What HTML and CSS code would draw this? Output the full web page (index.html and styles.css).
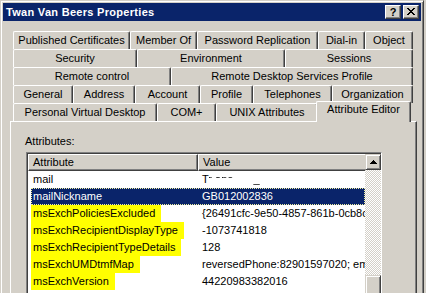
FILE: index.html
```html
<!DOCTYPE html>
<html lang="en">
<head>
    <meta charset="UTF-8">
    <meta name="viewport" content="width=device-width, initial-scale=1.0">
    <title>Twan Van Beers Properties</title>
    <link rel="stylesheet" href="styles.css">
</head>
<body>
    <div class="window">
        <div class="titlebar">
            <span class="title">Twan Van Beers Properties</span>
            <div class="caption-btns">
                <span class="caption-btn help">?</span>
                <span class="caption-btn close">
                    <svg width="8" height="7" viewBox="0 0 8 7" shape-rendering="crispEdges">
                        <path fill="#000" d="M0 0h2v1H0z M6 0h2v1H6z M1 1h2v1H1z M5 1h2v1H5z M2 2h4v1H2z M3 3h2v1H3z M2 4h4v1H2z M1 5h2v1H1z M5 5h2v1H5z M0 6h2v1H0z M6 6h2v1H6z"/>
                    </svg>
                </span>
            </div>
        </div>
        <div class="client">
            <div class="tabs">
                <div class="tab-row r1">
                    <div class="tab">Published Certificates</div>
                    <div class="tab">Member Of</div>
                    <div class="tab">Password Replication</div>
                    <div class="tab">Dial-in</div>
                    <div class="tab">Object</div>
                </div>
                <div class="tab-row r2">
                    <div class="tab">Security</div>
                    <div class="tab">Environment</div>
                    <div class="tab">Sessions</div>
                </div>
                <div class="tab-row r3">
                    <div class="tab">Remote control</div>
                    <div class="tab">Remote Desktop Services Profile</div>
                </div>
                <div class="tab-row r4">
                    <div class="tab">General</div>
                    <div class="tab">Address</div>
                    <div class="tab">Account</div>
                    <div class="tab">Profile</div>
                    <div class="tab">Telephones</div>
                    <div class="tab">Organization</div>
                </div>
                <div class="tab-row r5">
                    <div class="tab">Personal Virtual Desktop</div>
                    <div class="tab">COM+</div>
                    <div class="tab">UNIX Attributes</div>
                    <div class="tab active">Attribute Editor</div>
                </div>
            </div>
            <div class="panel">
                <div class="field-label">Attributes:</div>
                <div class="listbox">
                    <div class="list-main">
                        <div class="list-header">
                            <div class="col-head col-attr">Attribute</div>
                            <div class="col-head col-value">Value</div>
                        </div>
                        <div class="list-row">
                            <div class="row-inner">
                                <div class="cell-attr">mail</div>
                                <div class="cell-value">T<span class="redacted">r ane  </span><span class="redacted low">_</span><span class="redacted">  ·</span></div>
                            </div>
                        </div>
                        <div class="list-row selected">
                            <div class="row-inner">
                                <div class="cell-attr">mailNickname</div>
                                <div class="cell-value">GB012002836</div>
                            </div>
                        </div>
                        <div class="list-row">
                            <div class="row-inner">
                                <div class="cell-attr"><span class="hl">msExchPoliciesExcluded</span></div>
                                <div class="cell-value">{26491cfc-9e50-4857-861b-0cb8c0a1d2e3}</div>
                            </div>
                        </div>
                        <div class="list-row">
                            <div class="row-inner">
                                <div class="cell-attr"><span class="hl">msExchRecipientDisplayType</span></div>
                                <div class="cell-value">-1073741818</div>
                            </div>
                        </div>
                        <div class="list-row">
                            <div class="row-inner">
                                <div class="cell-attr"><span class="hl">msExchRecipientTypeDetails</span></div>
                                <div class="cell-value">128</div>
                            </div>
                        </div>
                        <div class="list-row">
                            <div class="row-inner">
                                <div class="cell-attr"><span class="hl">msExchUMDtmfMap</span></div>
                                <div class="cell-value">reversedPhone:82901597020; emailAddress:82626</div>
                            </div>
                        </div>
                        <div class="list-row">
                            <div class="row-inner">
                                <div class="cell-attr"><span class="hl">msExchVersion</span></div>
                                <div class="cell-value">44220983382016</div>
                            </div>
                        </div>
                    </div>
                    <div class="scrollbar">
                        <div class="sb-btn">
                            <svg width="7" height="4" viewBox="0 0 7 4" shape-rendering="crispEdges">
                                <path fill="#000" d="M3 0h1v1H3z M2 1h3v1H2z M1 2h5v1H1z M0 3h7v1H0z"/>
                            </svg>
                        </div>
                        <div class="sb-track"></div>
                        <div class="sb-thumb"></div>
                    </div>
                </div>
            </div>
        </div>
    </div>
</body>
</html>
```

FILE: styles.css
```css
* {
    margin: 0;
    padding: 0;
    box-sizing: border-box;
}
body {
    width: 426px;
    height: 293px;
    overflow: hidden;
    background-color: #d4d0c8;
    color: #000;
    font-family: 'Liberation Sans', Arial, sans-serif;
    font-size: 11px;
}
.window {
    width: 424px;
    height: 330px;
    border: 1px solid;
    border-color: #d4d0c8 #404040 #404040 #d4d0c8;
    box-shadow: inset 1px 1px #fff, inset -1px -1px #808080;
    padding: 2px;
}
.titlebar {
    height: 18px;
    background-color: #0a246a;
    display: flex;
    align-items: center;
    padding: 0 2px 0 3px;
}
.title {
    flex: 1;
    color: #fff;
    font-weight: bold;
    font-size: 11px;
    letter-spacing: 0.3px;
    white-space: nowrap;
}
.caption-btns {
    display: flex;
    gap: 2px;
}
.caption-btn {
    width: 16px;
    height: 14px;
    background-color: #d4d0c8;
    border: 1px solid;
    border-color: #fff #404040 #404040 #fff;
    box-shadow: inset -1px -1px #808080;
    display: flex;
    align-items: center;
    justify-content: center;
}
.caption-btn.help {
    font-weight: bold;
    font-size: 11px;
    line-height: 12px;
    padding-bottom: 1px;
}
.caption-btn.close svg {
    margin-bottom: 1px;
}

/* tab control */
.client {
    padding: 10px 4px 0 7px;
}
.tabs {
    margin: 0 4px 0 3px;
}
.tab-row {
    display: flex;
    height: 18px;
}
.tab {
    flex: none;
    height: 18px;
    background-color: #d4d0c8;
    border-top: 1px solid #fff;
    border-left: 1px solid #fff;
    border-right: 1px solid #404040;
    border-radius: 2px 2px 0 0;
    box-shadow: inset -1px 0 #808080;
    text-align: center;
    line-height: 15px;
    padding-top: 1px;
    white-space: nowrap;
    overflow: hidden;
}
.r1 .tab:nth-child(1) { width: 117px; }
.r1 .tab:nth-child(2) { width: 67px; }
.r1 .tab:nth-child(3) { width: 121px; }
.r1 .tab:nth-child(4) { width: 47px; }
.r1 .tab:nth-child(5) { width: 48px; }
.r2 .tab:nth-child(1) { width: 124px; }
.r2 .tab:nth-child(2) { width: 148px; }
.r2 .tab:nth-child(3) { width: 128px; }
.r3 .tab:nth-child(1) { width: 158px; }
.r3 .tab:nth-child(2) { width: 242px; }
.r4 .tab:nth-child(1) { width: 60px; }
.r4 .tab:nth-child(2) { width: 62px; }
.r4 .tab:nth-child(3) { width: 65px; }
.r4 .tab:nth-child(4) { width: 53px; }
.r4 .tab:nth-child(5) { width: 79px; }
.r4 .tab:nth-child(6) { width: 81px; }
.r5 .tab:nth-child(1) { width: 144px; }
.r5 .tab:nth-child(2) { width: 59px; }
.r5 .tab:nth-child(3) { width: 102px; }
.r5 .tab:nth-child(4) { width: 95px; }
.tab.active {
    position: relative;
    z-index: 1;
    width: 99px;
    height: 21px;
    margin: -2px -2px -1px -2px;
    padding-top: 0;
}

/* page */
.panel {
    height: 220px;
    border-top: 1px solid #fff;
    border-left: 1px solid #fff;
    border-right: 1px solid #404040;
    box-shadow: inset -1px 0 #808080;
    padding: 13px 0 0 14px;
}
.field-label {
    line-height: 13px;
    height: 13px;
    margin-bottom: 4px;
}
.listbox {
    width: 356px;
    height: 160px;
    margin-left: 1px;
    border: 1px solid;
    border-color: #808080 #fff #fff #808080;
    background-color: #404040;
    padding: 1px 0 0 1px;
    display: flex;
}
.list-main {
    flex: 1;
    background-color: #fff;
    overflow: hidden;
}
.list-header {
    display: flex;
    height: 17px;
    background-color: #d4d0c8;
}
.col-head {
    height: 17px;
    border-top: 1px solid #fff;
    border-left: 1px solid #fff;
    border-right: 1px solid #404040;
    border-bottom: 1px solid #404040;
    box-shadow: inset -1px -1px #808080;
    line-height: 14px;
    padding-left: 4px;
    white-space: nowrap;
}
.col-attr {
    width: 170px;
}
.col-value {
    flex: 1;
    border-right: none;
    box-shadow: inset 0 -1px #808080;
}
.list-row {
    height: 17px;
    padding-left: 3px;
}
.row-inner {
    display: flex;
    height: 17px;
    line-height: 17px;
    white-space: pre;
}
.cell-attr {
    width: 166px;
    flex: none;
    padding-left: 2px;
}
.cell-value {
    flex: 1;
    padding-left: 5px;
    overflow: hidden;
}
.list-row.selected .row-inner {
    background-color: #0a246a;
    color: #fff;
    outline: 1px dotted #f0f0a0;
    outline-offset: -1px;
}
.hl {
    display: inline-block;
    height: 17px;
    background-color: #ffff00;
    margin-left: -2px;
    padding: 0 6px 0 2px;
}
.redacted {
    color: transparent;
    background: linear-gradient(to bottom, transparent 0, transparent 25%, #000 25%, #000 45%, transparent 45%);
    -webkit-background-clip: text;
    background-clip: text;
}
.redacted.low {
    background: linear-gradient(to bottom, transparent 0, transparent 60%, #000 60%);
    -webkit-background-clip: text;
    background-clip: text;
    padding: 0 14px;
}

/* scrollbar */
.scrollbar {
    width: 16px;
    display: flex;
    flex-direction: column;
    background-color: #d4d0c8;
}
.sb-btn,
.sb-thumb {
    flex: none;
    width: 16px;
    height: 16px;
    background-color: #d4d0c8;
    border: 1px solid;
    border-color: #d4d0c8 #404040 #404040 #d4d0c8;
    box-shadow: inset 1px 1px #fff, inset -1px -1px #808080;
    display: flex;
    align-items: center;
    justify-content: center;
}
.sb-track {
    flex: none;
    height: 105px;
    background: repeating-conic-gradient(#fff 0 25%, #d4d0c8 0 50%) 0 0 / 2px 2px;
}
.sb-thumb {
    height: 40px;
}
```
